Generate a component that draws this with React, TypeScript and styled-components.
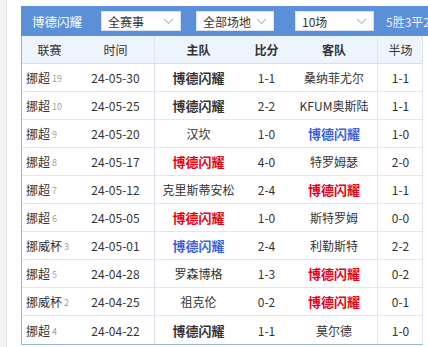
import styled, { createGlobalStyle } from "styled-components"

const GlobalStyle = createGlobalStyle`
  html, body {
    margin: 0;
    padding: 0;
    background: #ffffff;
    overflow: hidden;
  }
  body {
    font-family: "Noto Sans CJK SC", "Liberation Sans", sans-serif;
    font-size: 12px;
    color: #333333;
  }
`

const Page = styled.div`
  display: flex;
  width: 428px;
  height: 347px;
  overflow: hidden;
`

const SideStrip = styled.div`
  width: 6px;
  flex: none;
  background: #f3f3f3;
  border-right: 1px solid #e4e4e4;
`

const Content = styled.div`
  flex: none;
  margin-left: 14px;
  padding-top: 6px;
  width: 420px;
`

const TopBar = styled.div`
  height: 30px;
  width: 420px;
  background: #5b8fd7;
  display: flex;
  align-items: center;
  color: #ffffff;
  box-sizing: border-box;
  padding-left: 11px;
  white-space: nowrap;
`

const TeamTitle = styled.span`
  font-size: 12.5px;
  width: 69px;
  flex: none;
`

const Select = styled.div<{ $w: number; $gap: number }>`
  width: ${(p) => p.$w}px;
  height: 20px;
  flex: none;
  box-sizing: border-box;
  background: #ffffff;
  border: 1px solid #d6e2f3;
  color: #333333;
  display: flex;
  align-items: center;
  justify-content: space-between;
  padding: 0 6px 0 6px;
  margin-right: ${(p) => p.$gap}px;
  font-size: 12px;
`

const Summary = styled.span`
  color: #e9f1ff;
  font-size: 12px;
`

const Table = styled.div`
  width: 402px;
  box-sizing: border-box;
  border-left: 1px solid #94b2dc;
  border-right: 1px solid #dbe4f0;
  border-bottom: 1px solid #94b2dc;
`

const Row = styled.div<{ $head?: boolean }>`
  display: grid;
  grid-template-columns: 55px 78px 87px 49px 87px 45px;
  height: 28px;
  box-sizing: border-box;
  border-bottom: 1px solid ${(p) => (p.$head ? "#d3e0f1" : "#dfe7f2")};
  background: ${(p) => (p.$head ? "#eef4fc" : "#ffffff")};
  &:last-child {
    border-bottom: none;
  }
`

const Cell = styled.div<{ $sep?: boolean; $left?: boolean; $bold?: boolean }>`
  display: flex;
  align-items: center;
  justify-content: ${(p) => (p.$left ? "flex-start" : "center")};
  padding-left: ${(p) => (p.$left ? "4px" : "0")};
  border-right: ${(p) => (p.$sep ? "1px solid #dbe4f0" : "none")};
  font-weight: ${(p) => (p.$bold ? "bold" : "normal")};
  white-space: nowrap;
  overflow: hidden;
  font-size: 12px;
  color: #333333;
`

const Round = styled.span`
  font-size: 9px;
  color: #a0a0a0;
  margin-left: 2px;
  padding-top: 2px;
`

const Team = styled.span<{ $res?: "w" | "l" | "d" }>`
  font-weight: ${(p) => (p.$res ? "bold" : "normal")};
  font-size: ${(p) => (p.$res ? "13px" : "12px")};
  color: ${(p) =>
    p.$res === "w" ? "#e60012" : p.$res === "l" ? "#3b5fdc" : "#333333"};
`

const Chevron = () => (
  <svg width="11" height="7" viewBox="0 0 11 7">
    <polyline
      points="1,1 5.5,5.5 10,1"
      fill="none"
      stroke="#b8c2cf"
      strokeWidth="1.2"
    />
  </svg>
)

type Match = {
  league: string
  round: number
  date: string
  home: string
  score: string
  away: string
  half: string
  res: "w" | "l" | "d"
}

const ME = "博德闪耀"

const matches: Match[] = [
  { league: "挪超", round: 19, date: "24-05-30", home: ME, score: "1-1", away: "桑纳菲尤尔", half: "1-1", res: "d" },
  { league: "挪超", round: 10, date: "24-05-25", home: ME, score: "2-2", away: "KFUM奥斯陆", half: "1-1", res: "d" },
  { league: "挪超", round: 9, date: "24-05-20", home: "汉坎", score: "1-0", away: ME, half: "1-0", res: "l" },
  { league: "挪超", round: 8, date: "24-05-17", home: ME, score: "4-0", away: "特罗姆瑟", half: "2-0", res: "w" },
  { league: "挪超", round: 7, date: "24-05-12", home: "克里斯蒂安松", score: "2-4", away: ME, half: "1-1", res: "w" },
  { league: "挪超", round: 6, date: "24-05-05", home: ME, score: "1-0", away: "斯特罗姆", half: "0-0", res: "w" },
  { league: "挪威杯", round: 3, date: "24-05-01", home: ME, score: "2-4", away: "利勒斯特", half: "2-2", res: "l" },
  { league: "挪超", round: 5, date: "24-04-28", home: "罗森博格", score: "1-3", away: ME, half: "0-2", res: "w" },
  { league: "挪威杯", round: 2, date: "24-04-25", home: "祖克伦", score: "0-2", away: ME, half: "0-1", res: "w" },
  { league: "挪超", round: 4, date: "24-04-22", home: ME, score: "1-1", away: "莫尔德", half: "1-0", res: "d" },
]

const TeamName = ({ name, res }: { name: string; res: Match["res"] }) =>
  name === ME ? <Team $res={res}>{name}</Team> : <Team>{name}</Team>

export default function App() {
  return (
    <Page>
      <GlobalStyle />
      <SideStrip />
      <Content>
        <TopBar>
          <TeamTitle>博德闪耀</TeamTitle>
          <Select $w={80} $gap={15}>
            全赛事
            <Chevron />
          </Select>
          <Select $w={78} $gap={21}>
            全部场地
            <Chevron />
          </Select>
          <Select $w={79} $gap={12}>
            10场
            <Chevron />
          </Select>
          <Summary>5胜3平2负</Summary>
        </TopBar>
        <Table>
          <Row $head>
            <Cell>联赛</Cell>
            <Cell $sep>时间</Cell>
            <Cell $bold>主队</Cell>
            <Cell $bold>比分</Cell>
            <Cell $bold $sep>客队</Cell>
            <Cell>半场</Cell>
          </Row>
          {matches.map((m) => (
            <Row key={m.date}>
              <Cell $left>
                {m.league}
                <Round>{m.round}</Round>
              </Cell>
              <Cell $sep>{m.date}</Cell>
              <Cell>
                <TeamName name={m.home} res={m.res} />
              </Cell>
              <Cell>{m.score}</Cell>
              <Cell $sep>
                <TeamName name={m.away} res={m.res} />
              </Cell>
              <Cell>{m.half}</Cell>
            </Row>
          ))}
        </Table>
      </Content>
    </Page>
  )
}
